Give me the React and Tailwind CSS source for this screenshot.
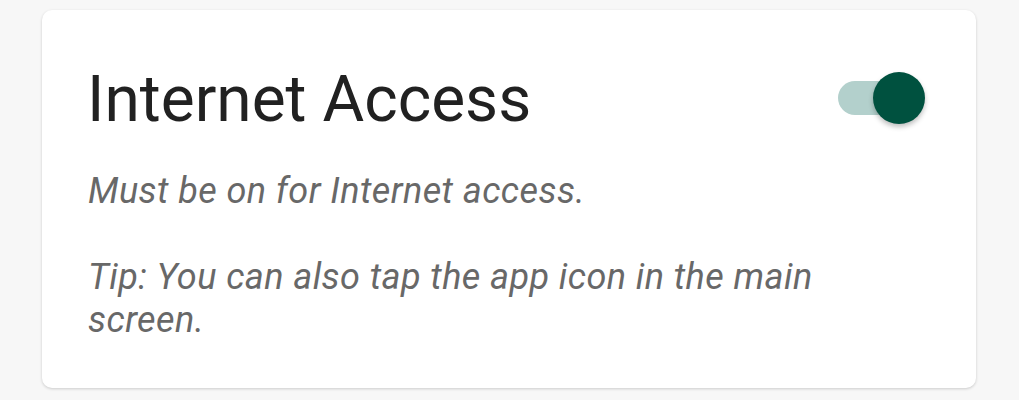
import React from "react";

function Toggle() {
  return (
    <div className="relative w-[87px] h-[52px] shrink-0 -mt-[4px]">
      <div className="absolute left-0 top-[9px] w-[77px] h-[34px] rounded-full bg-[#b3d0cc]" />
      <div className="absolute right-0 top-0 w-[52px] h-[52px] rounded-full bg-[#00513f] shadow-[0_3px_5px_rgba(0,0,0,0.25)]" />
    </div>
  );
}

export default function App() {
  return (
    <div
      className="min-h-[400px] bg-[#f7f7f7] pt-[10px] pl-[42px] pr-[43px]"
      style={{ fontFamily: "Roboto, 'Noto Sans', sans-serif" }}
    >
      <div className="bg-white rounded-[10px] shadow-[0_1px_3px_rgba(0,0,0,0.18)] h-[378px] pl-[46px] pr-[51px] pt-[52px]">
        <div className="flex items-center justify-between">
          <h1 className="text-[64px] leading-[75px] text-[#212121] font-normal -ml-[1px]">
            Internet Access
          </h1>
          <Toggle />
        </div>
        <p className="mt-[33px] italic text-[36px] leading-[43px] tracking-[0.012em] text-[#686868] max-w-[790px]">
          Must be on for Internet access.
        </p>
        <p className="mt-[43px] italic text-[36px] leading-[43px] tracking-[0.012em] text-[#686868] max-w-[790px]">
          Tip: You can also tap the app icon in the main screen.
        </p>
      </div>
    </div>
  );
}
